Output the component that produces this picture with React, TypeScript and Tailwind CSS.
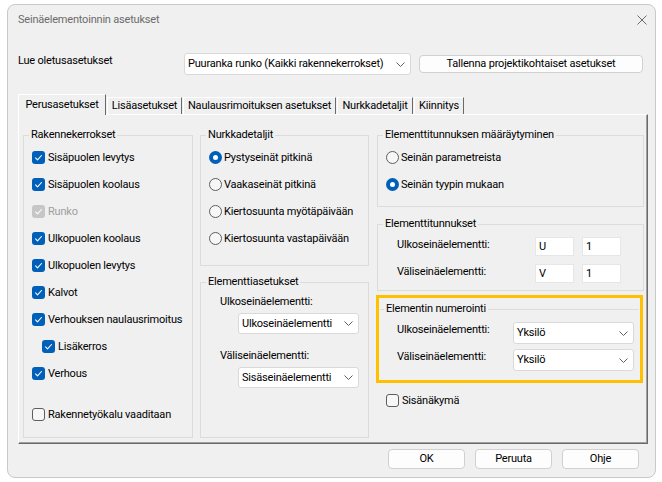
import React from 'react'

const base = "font-['Roboto',sans-serif] text-[11px] leading-[14px] tracking-[-0.2px] text-black"

function Tick() {
  return (
    <svg width="13" height="13" viewBox="0 0 13 13" fill="none">
      <path d="M3.6 6.9 5.5 8.8 9.5 4.5" stroke="white" strokeWidth={1.1} strokeLinecap="round" strokeLinejoin="round" />
    </svg>
  )
}

function Chevron() {
  return (
    <svg width="9" height="5" viewBox="0 0 9 5" fill="none">
      <path d="M0.5 0.5 4.5 4.5 8.5 0.5" stroke="#5f5f5f" strokeWidth={1} />
    </svg>
  )
}

function Check({ label, checked, disabled, indent }: { label: string; checked?: boolean; disabled?: boolean; indent?: boolean }) {
  const box = checked
    ? disabled
      ? 'bg-[#c6c6c6]'
      : 'bg-[#005fb8]'
    : 'border border-[#5e5e5e] bg-[#f7f7f7]'
  return (
    <div className={`flex h-[27px] items-center gap-[3px] ${indent ? 'ml-[10px]' : ''}`}>
      <span className={`flex h-[13px] w-[13px] shrink-0 items-center justify-center rounded-[3px] ${box}`}>
        {checked && <Tick />}
      </span>
      <span className={disabled ? 'text-[#9e9e9e]' : ''}>{label}</span>
    </div>
  )
}

function Radio({ label, selected }: { label: string; selected?: boolean }) {
  return (
    <div className="flex h-[27px] items-center gap-[2px]">
      {selected ? (
        <span className="flex h-[13px] w-[13px] shrink-0 items-center justify-center rounded-full bg-[#005fb8]">
          <span className="h-[5px] w-[5px] rounded-full bg-white" />
        </span>
      ) : (
        <span className="h-[13px] w-[13px] shrink-0 rounded-full border border-[#5e5e5e] bg-[#f7f7f7]" />
      )}
      <span>{label}</span>
    </div>
  )
}

function Combo({ value, className }: { value: string; className: string }) {
  return (
    <div className={`flex items-center justify-between rounded-[3px] border border-[#d9d9d9] bg-white pl-[3px] pr-[5px] ${className}`}>
      <span>{value}</span>
      <Chevron />
    </div>
  )
}

function Group({ title, className, children }: { title: string; className?: string; children?: React.ReactNode }) {
  return (
    <fieldset className={`border border-[#dcdcdc] pl-[5px] ${className ?? ''}`}>
      <legend className="px-[2px] leading-[14px]">{title}</legend>
      <div className="ml-[3px]">{children}</div>
    </fieldset>
  )
}

function Button({ label, className }: { label: string; className: string }) {
  return (
    <div className={`flex items-center justify-center rounded-[4px] border border-[#d0d0d0] bg-[#fdfdfd] ${className}`}>
      {label}
    </div>
  )
}

function Field({ value }: { value: string }) {
  return <div className="h-[19px] w-[39px] border border-[#e6e6e6] bg-white pl-[3px] leading-[17px]">{value}</div>
}

const tabs = [
  { label: 'Perusasetukset', w: 'w-[88px]' },
  { label: 'Lisäasetukset', w: 'w-[75px]' },
  { label: 'Naulausrimoituksen asetukset', w: 'w-[153px]' },
  { label: 'Nurkkadetaljit', w: 'w-[76px]' },
  { label: 'Kiinnitys', w: 'w-[50px]' },
]

export default function App() {
  return (
    <div className={`h-[482px] w-[662px] bg-white pl-[7px] pt-[4px] ${base}`}>
      <div className="flex h-[474px] w-[649px] flex-col rounded-[8px] border border-[#c9c9c9] bg-[#f0f0f0]">
        {/* Title bar */}
        <div className="flex h-[29px] items-center justify-between pl-[10px] pr-[8px]">
          <span className="text-[#6b6b6b]">Seinäelementoinnin asetukset</span>
          <svg width="10" height="10" viewBox="0 0 10 10" fill="none">
            <path d="M0.5 0.5 9.5 9.5M9.5 0.5 0.5 9.5" stroke="#6b6b6b" strokeWidth={1} />
          </svg>
        </div>

        <div className="px-[10px]">
          {/* Defaults row */}
          <div className="mt-[19px] flex items-start">
            <span className="w-[166px] pt-[1px]">Lue oletusasetukset</span>
            <Combo value="Puuranka runko (Kaikki rakennekerrokset)" className="h-[22px] w-[227px]" />
            <Button label="Tallenna projektikohtaiset asetukset" className="ml-[8px] mt-[2px] h-[18px] w-[224px]" />
          </div>

          {/* Tabs */}
          <div className="mt-[19px] flex h-[20px] items-end">
            {tabs.map((t, i) =>
              i === 0 ? (
                <div
                  key={t.label}
                  className={`relative z-10 -mb-px flex h-[21px] items-center justify-center border-l border-t border-r border-l-white border-t-white border-r-[#696969] bg-[#f0f0f0] ${t.w}`}
                >
                  {t.label}
                </div>
              ) : (
                <div
                  key={t.label}
                  className={`ml-px flex h-[17px] items-center justify-center border-l border-t border-r border-l-white border-t-white border-r-[#696969] ${t.w}`}
                >
                  {t.label}
                </div>
              )
            )}
          </div>

          {/* Tab panel */}
          <div className="flex h-[330px] w-[630px] border border-t-white border-l-white border-r-[#696969] border-b-[#696969] pl-[4px] pt-[13px] shadow-[inset_-1px_-1px_0_#a0a0a0]">
            {/* Column 1 */}
            <Group title="Rakennekerrokset" className="h-[310px] w-[170px]">
              <div className="mt-[2px]">
                <Check label="Sisäpuolen levytys" checked />
                <Check label="Sisäpuolen koolaus" checked />
                <Check label="Runko" checked disabled />
                <Check label="Ulkopuolen koolaus" checked />
                <Check label="Ulkopuolen levytys" checked />
                <Check label="Kalvot" checked />
                <Check label="Verhouksen naulausrimoitus" checked />
                <Check label="Lisäkerros" checked indent />
                <Check label="Verhous" checked />
                <div className="mt-[14px]">
                  <Check label="Rakennetyökalu vaaditaan" />
                </div>
              </div>
            </Group>

            {/* Column 2 */}
            <div className="ml-[7px] flex w-[169px] flex-col">
              <Group title="Nurkkadetaljit" className="h-[138px]">
                <div className="mt-[2px]">
                  <Radio label="Pystyseinät pitkinä" selected />
                  <Radio label="Vaakaseinät pitkinä" />
                  <Radio label="Kiertosuunta myötäpäivään" />
                  <Radio label="Kiertosuunta vastapäivään" />
                </div>
              </Group>
              <Group title="Elementtiasetukset" className="mt-[9px] h-[163px]">
                <div className="ml-[11px] mt-[6px]">Ulkoseinäelementti:</div>
                <Combo value="Ulkoseinäelementti" className="ml-[29px] mt-[4px] h-[21px] w-[121px]" />
                <div className="ml-[11px] mt-[15px]">Väliseinäelementti:</div>
                <Combo value="Sisäseinäelementti" className="ml-[29px] mt-[4px] h-[21px] w-[121px]" />
              </Group>
            </div>

            {/* Column 3 */}
            <div className="ml-[8px] flex w-[267px] flex-col">
              <Group title="Elementtitunnuksen määräytyminen" className="h-[79px]">
                <div className="mt-[2px]">
                  <Radio label="Seinän parametreista" />
                  <Radio label="Seinän tyypin mukaan" selected />
                </div>
              </Group>
              <Group title="Elementtitunnukset" className="mt-[10px] h-[74px]">
                <div className="mt-[6px] flex h-[19px] items-center">
                  <span className="mb-[4px] ml-[11px] w-[138px]">Ulkoseinäelementti:</span>
                  <Field value="U" />
                  <span className="w-[8px]" />
                  <Field value="1" />
                </div>
                <div className="mt-[8px] flex h-[19px] items-center">
                  <span className="mb-[4px] ml-[11px] w-[138px]">Väliseinäelementti:</span>
                  <Field value="V" />
                  <span className="w-[8px]" />
                  <Field value="1" />
                </div>
              </Group>

              {/* Highlighted numbering group */}
              <div className="-ml-px mt-[4px] h-[88px] w-[267px] border-[3px] border-[#ffc000] pt-[4px]">
                <fieldset className="mx-px border-t border-[#dcdcdc] pl-[4px]">
                  <legend className="px-[2px] leading-[14px]">Elementin numerointi</legend>
                  <div className="ml-[3px]">
                    <div className="mt-[6px] flex h-[22px] items-center">
                      <span className="mb-[6px] ml-[10px] w-[116px]">Ulkoseinäelementti:</span>
                      <Combo value="Yksilö" className="h-[22px] w-[121px]" />
                    </div>
                    <div className="mt-[5px] flex h-[22px] items-center">
                      <span className="mb-[6px] ml-[10px] w-[116px]">Väliseinäelementti:</span>
                      <Combo value="Yksilö" className="h-[22px] w-[121px]" />
                    </div>
                  </div>
                </fieldset>
              </div>

              <div className="ml-[9px] mt-[4px]">
                <Check label="Sisänäkymä" />
              </div>
            </div>
          </div>

          {/* Dialog buttons */}
          <div className="mt-[5px] flex justify-end gap-[10px] pr-[6px]">
            <Button label="OK" className="h-[20px] w-[77px]" />
            <Button label="Peruuta" className="h-[20px] w-[77px]" />
            <Button label="Ohje" className="h-[20px] w-[77px]" />
          </div>
        </div>
      </div>
    </div>
  )
}
